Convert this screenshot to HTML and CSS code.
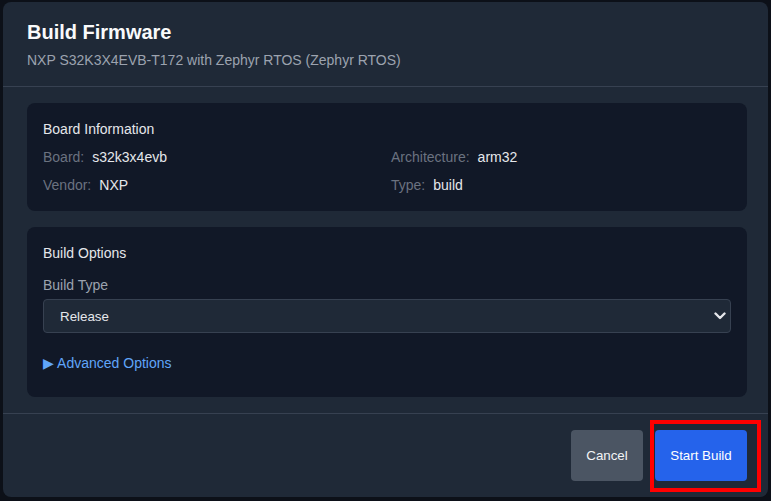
FILE: index.html
```html
<!DOCTYPE html>
<html lang="en">
<head>
<meta charset="utf-8">
<title>Build Firmware</title>
<link rel="stylesheet" href="styles.css">
</head>
<body>
<div class="overlay">
  <div class="modal">
    <header class="modal-header">
      <h2 class="modal-title">Build Firmware</h2>
      <p class="modal-subtitle">NXP S32K3X4EVB-T172 with Zephyr RTOS (Zephyr RTOS)</p>
    </header>
    <div class="modal-body">
      <section class="card">
        <h3 class="card-title">Board Information</h3>
        <div class="info-grid">
          <div class="info-item"><span class="info-label">Board:</span><span class="info-value">s32k3x4evb</span></div>
          <div class="info-item"><span class="info-label">Architecture:</span><span class="info-value">arm32</span></div>
          <div class="info-item"><span class="info-label">Vendor:</span><span class="info-value">NXP</span></div>
          <div class="info-item"><span class="info-label">Type:</span><span class="info-value">build</span></div>
        </div>
      </section>
      <section class="card">
        <h3 class="card-title">Build Options</h3>
        <label class="field-label" for="build-type">Build Type</label>
        <div class="select-wrap">
          <select id="build-type" class="select">
            <option>Release</option>
            <option>Debug</option>
          </select>
          <svg class="select-chevron" width="12" height="8" viewBox="0 0 12 8" aria-hidden="true">
            <path d="M1.5 1.5 L6 6 L10.5 1.5" fill="none" stroke="#e5e7eb" stroke-width="2.4" stroke-linecap="round" stroke-linejoin="round"/>
          </svg>
        </div>
        <div class="advanced">&#9654; Advanced Options</div>
      </section>
    </div>
    <footer class="modal-footer">
      <button class="btn btn-cancel">Cancel</button>
      <button class="btn btn-primary">Start Build</button>
      <div class="highlight"></div>
    </footer>
  </div>
</div>
</body>
</html>
```

FILE: styles.css
```css
* { box-sizing: border-box; }

html, body {
  margin: 0;
  height: 501px;
  overflow: hidden;
}

body {
  background: #0c1018;
  font-family: "Liberation Sans", Arial, sans-serif;
  color: #e5e7eb;
}

.overlay {
  padding: 2px 3px 0 3px;
}

.modal {
  background: #1f2937;
  border-radius: 8px;
  height: 495px;
  display: flex;
  flex-direction: column;
}

.modal-header {
  padding: 16px 24px;
  border-bottom: 1px solid #374151;
}

.modal-title {
  margin: 0;
  font-size: 20px;
  line-height: 28px;
  font-weight: 700;
  color: #f9fafb;
}

.modal-subtitle {
  margin: 4px 0 0;
  font-size: 14px;
  line-height: 20px;
  color: #9ca3af;
}

.modal-body {
  flex: 1;
  padding: 16px 21px 16px 24px;
  display: flex;
  flex-direction: column;
  gap: 16px;
}

.card {
  background: #111827;
  border-radius: 8px;
  padding: 16px;
}

.card-title {
  margin: 0;
  font-size: 14px;
  line-height: 20px;
  font-weight: 400;
  color: #e5e7eb;
}

.info-grid {
  margin-top: 8px;
  display: grid;
  grid-template-columns: 1fr 1fr;
  column-gap: 8px;
  row-gap: 8px;
}

.info-item {
  font-size: 14px;
  line-height: 20px;
}

.info-label {
  color: #6b7280;
  margin-right: 8px;
}

.info-value {
  color: #e5e7eb;
}

.field-label {
  display: block;
  margin-top: 12px;
  font-size: 14px;
  line-height: 20px;
  color: #9ca3af;
}

.select-wrap {
  position: relative;
  margin-top: 4px;
}

.select {
  display: block;
  width: 100%;
  height: 34px;
  appearance: none;
  -webkit-appearance: none;
  background: #1f2937;
  border: 1px solid #374151;
  border-radius: 4px;
  color: #e5e7eb;
  font-family: "Liberation Sans", Arial, sans-serif;
  font-size: 13.33px;
  padding: 0 30px 0 16px;
  outline: none;
}

.select-chevron {
  position: absolute;
  right: 5px;
  top: 13px;
  pointer-events: none;
}

.advanced {
  margin-top: 20px;
  margin-bottom: 8px;
  font-size: 14px;
  line-height: 20px;
  color: #60a5fa;
}

.modal-footer {
  position: relative;
  border-top: 1px solid #374151;
  padding: 16px 21px 16px 24px;
  display: flex;
  justify-content: flex-end;
  gap: 12px;
}

.btn {
  height: 51px;
  border: none;
  border-radius: 4px;
  font-family: "Liberation Sans", Arial, sans-serif;
  font-size: 13.33px;
  color: #f3f4f6;
  cursor: pointer;
}

.btn-cancel {
  width: 72px;
  background: #4b5563;
}

.btn-primary {
  width: 92px;
  background: #2563eb;
  color: #ffffff;
}

.highlight {
  position: absolute;
  left: 647px;
  top: 6px;
  width: 111px;
  height: 72px;
  border: 4px solid #ff0000;
  pointer-events: none;
}
```
